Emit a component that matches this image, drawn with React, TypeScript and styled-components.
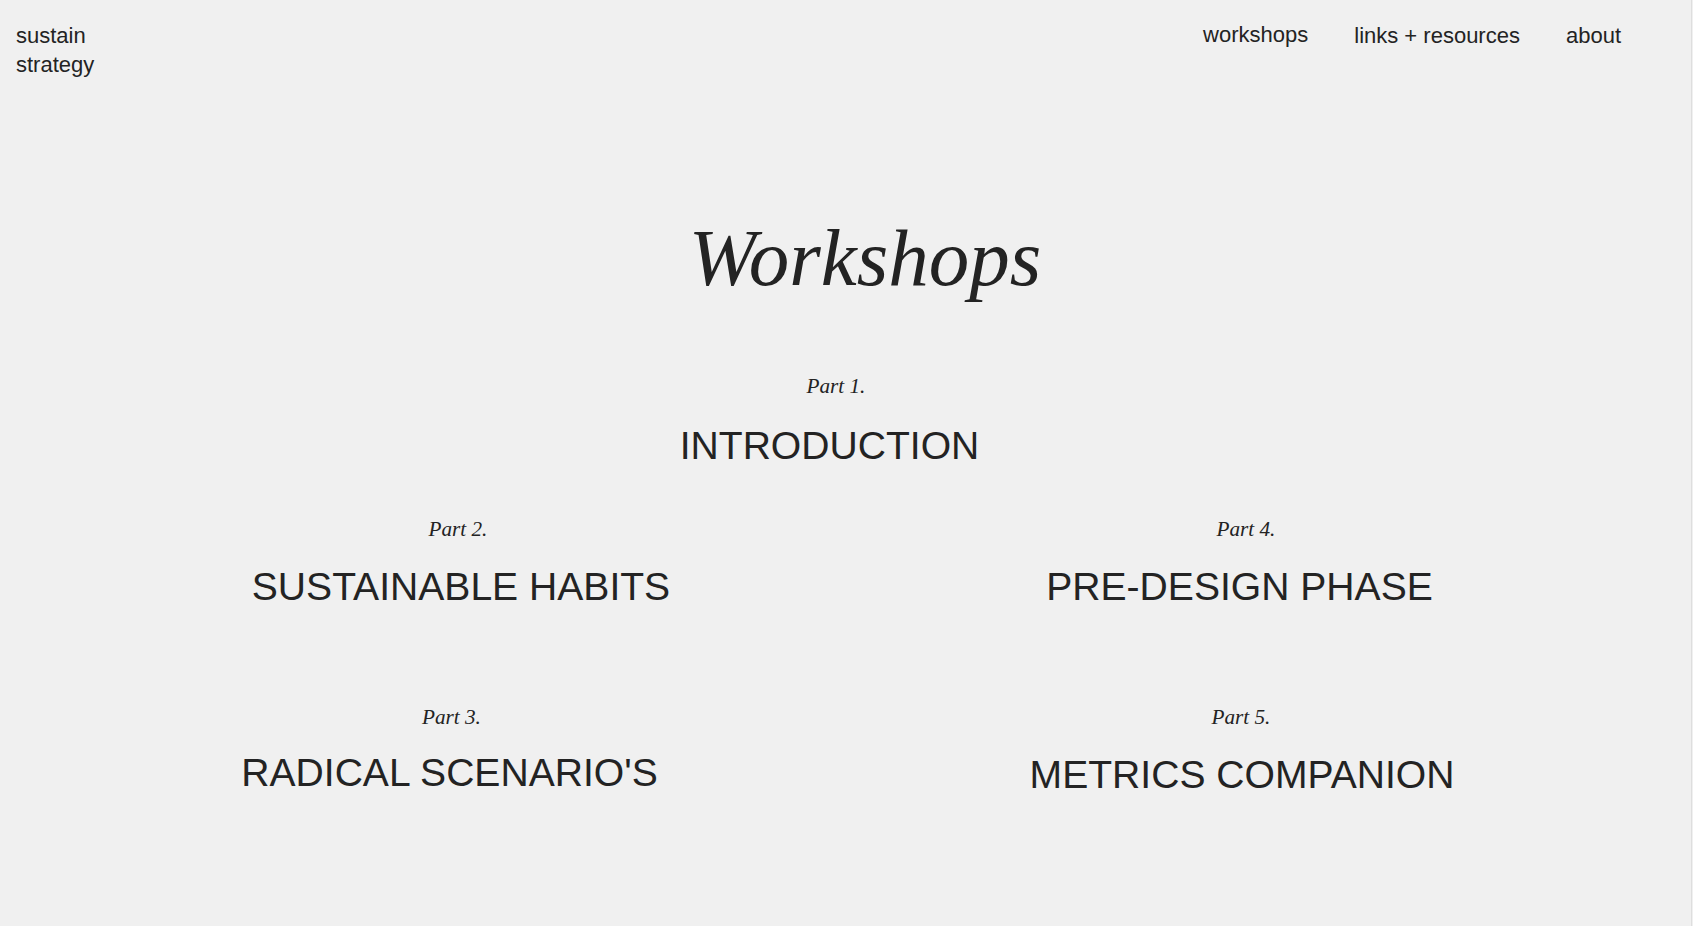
import React from "react";
import styled, { createGlobalStyle } from "styled-components";

const GlobalStyle = createGlobalStyle`
  html, body {
    margin: 0;
    padding: 0;
    background: #f0f0f0;
  }
  body {
    font-family: "Liberation Sans", Arial, sans-serif;
    color: #232323;
  }
  * { box-sizing: border-box; }
`;

const Page = styled.div`
  width: 1692px;
  min-height: 926px;
  border-right: 1px solid #dedede;
  background: #f0f0f0;
  display: flex;
  flex-direction: column;
`;

const Header = styled.header`
  display: flex;
  justify-content: space-between;
  align-items: flex-start;
  padding: 22px 70px 0 16px;
`;

const Logo = styled.div`
  font-family: "Liberation Sans", Arial, sans-serif;
  font-size: 22px;
  line-height: 28.6px;
  color: #232323;
`;

const Nav = styled.nav`
  display: flex;
  gap: 46px;
  align-items: flex-start;
`;

const NavLink = styled.a<{ $lift?: number }>`
  font-family: "Liberation Sans", Arial, sans-serif;
  font-size: 22px;
  line-height: 28.6px;
  color: #232323;
  text-decoration: none;
  margin-top: ${(p) => -(p.$lift ?? 0)}px;
`;

const Main = styled.main`
  display: flex;
  flex-direction: column;
  padding: 0 59.5px;
`;

const Title = styled.h1<{ $shift?: number }>`
  margin: 139px 0 0;
  margin-left: ${(p) => (p.$shift ?? 0) * 2}px;
  font-family: "Liberation Serif", "Times New Roman", serif;
  font-style: italic;
  font-weight: 400;
  font-size: 81px;
  line-height: 1;
  text-align: center;
  color: #232323;
`;

const Grid = styled.div`
  display: grid;
  grid-template-columns: 1fr 1fr;
  row-gap: 101px;
  margin-top: 54.3px;
`;

const Item = styled.a<{ $top?: number }>`
  display: flex;
  flex-direction: column;
  text-decoration: none;
  color: inherit;
  margin-top: ${(p) => p.$top ?? 0}px;
`;

const PartLabel = styled.div<{ $shift?: number }>`
  font-family: "Liberation Serif", "Times New Roman", serif;
  font-style: italic;
  font-size: 21.2px;
  line-height: 20.8px;
  text-align: center;
  color: #232323;
  margin-left: ${(p) => (p.$shift ?? 0) * 2}px;
`;

const Heading = styled.h2<{ $shift?: number; $gap?: number }>`
  margin: ${(p) => p.$gap ?? 27.4}px 0 0;
  margin-left: ${(p) => (p.$shift ?? 0) * 2}px;
  font-family: "Liberation Sans", Arial, sans-serif;
  font-weight: 400;
  font-size: 39.1px;
  line-height: 1;
  text-align: center;
  color: #232323;
`;

type Workshop = {
  part: string;
  title: string;
  partShift: number;
  titleShift: number;
  gap: number;
};

const intro: Workshop = {
  part: "Part 1.",
  title: "INTRODUCTION",
  partShift: -9.5,
  titleShift: -16,
  gap: 29.1,
};

const workshops: Workshop[] = [
  { part: "Part 2.", title: "SUSTAINABLE HABITS", partShift: 5.5, titleShift: 8.5, gap: 27.4 },
  { part: "Part 4.", title: "PRE-DESIGN PHASE", partShift: 7.5, titleShift: 1, gap: 27.4 },
  { part: "Part 3.", title: "RADICAL SCENARIO'S", partShift: -1, titleShift: -3, gap: 25.2 },
  { part: "Part 5.", title: "METRICS COMPANION", partShift: 2.5, titleShift: 3.5, gap: 26.5 },
];

export default function App() {
  return (
    <>
      <GlobalStyle />
      <Page>
        <Header>
          <Logo>
            sustain
            <br />
            strategy
          </Logo>
          <Nav>
            <NavLink href="#" $lift={1}>workshops</NavLink>
            <NavLink href="#">links + resources</NavLink>
            <NavLink href="#">about</NavLink>
          </Nav>
        </Header>
        <Main>
          <Title $shift={19.5}>Workshops</Title>
          <Item href="#" $top={76.6}>
            <PartLabel $shift={intro.partShift}>{intro.part}</PartLabel>
            <Heading $shift={intro.titleShift} $gap={intro.gap}>
              {intro.title}
            </Heading>
          </Item>
          <Grid>
            {workshops.map((w) => (
              <Item key={w.part} href="#">
                <PartLabel $shift={w.partShift}>{w.part}</PartLabel>
                <Heading $shift={w.titleShift} $gap={w.gap}>
                  {w.title}
                </Heading>
              </Item>
            ))}
          </Grid>
        </Main>
      </Page>
    </>
  );
}
